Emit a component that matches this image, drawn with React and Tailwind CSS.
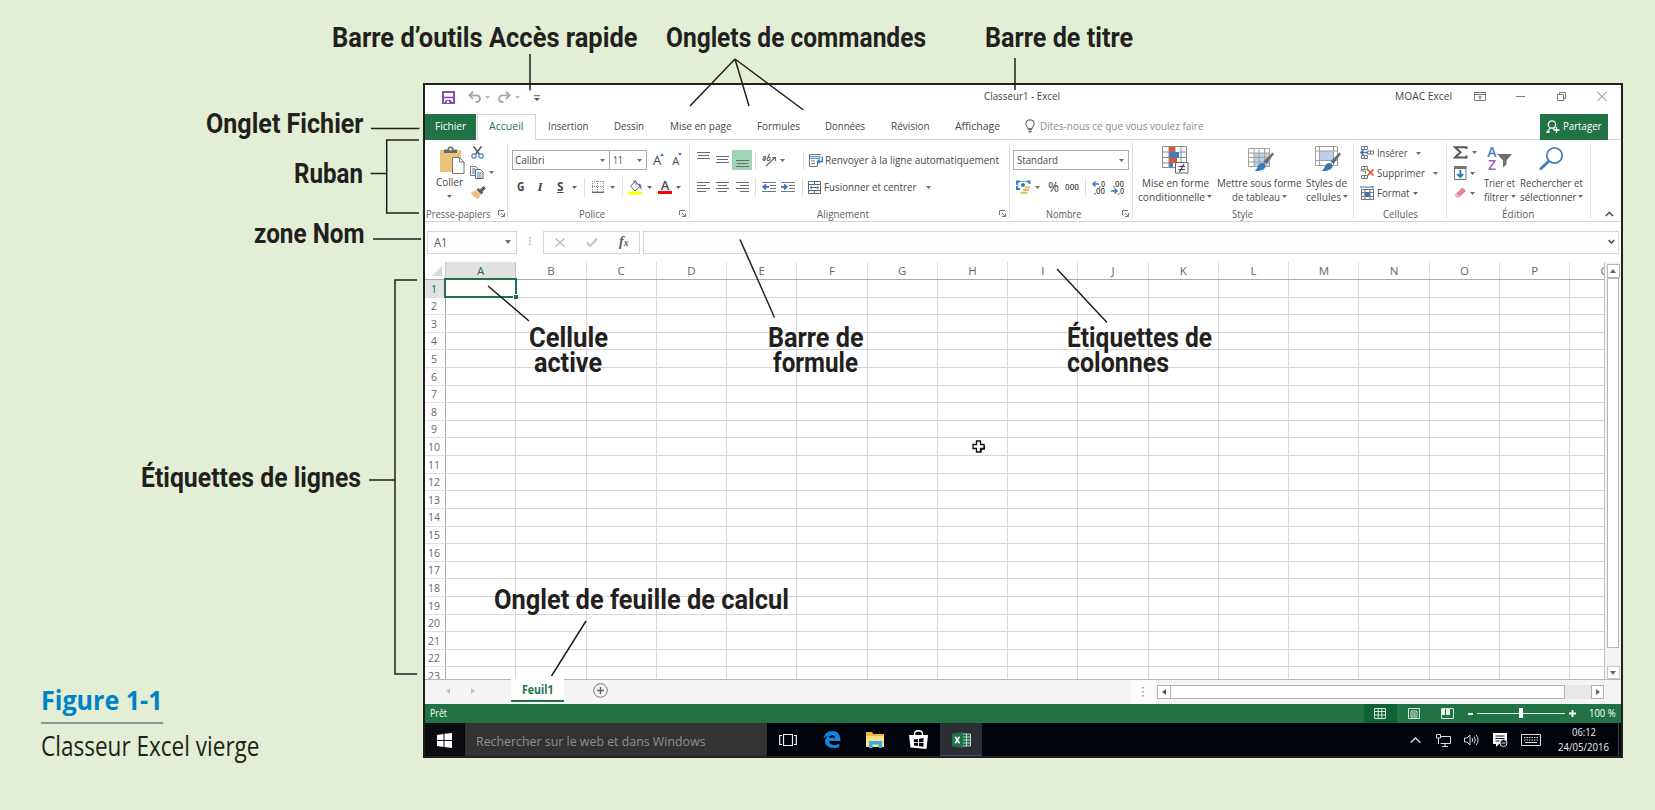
import { useLayoutEffect, useRef } from "react";

// Single-line text condensed or expanded horizontally to a given width.
function T({ w, className = "", children }) {
  const ref = useRef(null);
  useLayoutEffect(() => {
    const el = ref.current;
    el.style.transform = "none";
    const natural = el.getBoundingClientRect().width;
    if (natural) el.style.transform = `scaleX(${w / natural})`;
  }, [w, children]);
  return (
    <span className={`inline-flex shrink-0 justify-start ${className}`} style={{ width: w }}>
      <span ref={ref} className="origin-left whitespace-nowrap">{children}</span>
    </span>
  );
}

function Svg({ w, h, className = "", children }) {
  return (
    <svg width={w} height={h} viewBox={`0 0 ${w} ${h}`} className={`block shrink-0 ${className}`} fill="none">
      {children}
    </svg>
  );
}

const Caret = ({ className = "" }) => (
  <Svg w={5} h={3} className={className}><path d="M0 0h5L2.5 3z" fill="#6a6a6a" /></Svg>
);

const Launcher = ({ className = "" }) => (
  <Svg w={7} h={7} className={className}>
    <path d="M.5 5V.5H6M3 3l3 3M6.500 3v3.500H3" stroke="#777" />
  </Svg>
);

const Lines = ({ rows, w = 13, h = 11, className = "" }) => (
  <Svg w={w} h={h} className={className}>
    {rows.map(([x1, x2, y]) => (
      <path key={y} d={`M${x1} ${y}H${x2}`} stroke="#6b6b6b" />
    ))}
  </Svg>
);

const VSep = ({ h = "h-[19px]", className = "" }) => <div className={`w-px shrink-0 bg-[#e0e0e0] ${h} ${className}`} />;

function Group({ width, label, labelW, labelX, launcherX, children }) {
  return (
    <div className={`flex shrink-0 ${width}`}>
      <div className="flex min-w-0 flex-1 flex-col">
        <div className="flex h-[66px]">{children}</div>
        <div className="flex h-[15px] items-center">
          <span className="shrink-0" style={{ width: labelX }} />
          <T w={labelW} className="text-[11px] leading-[14px] text-[#5e5e5e]">{label}</T>
          {launcherX && (
            <>
              <span className="shrink-0" style={{ width: launcherX - labelX - labelW }} />
              <Launcher />
            </>
          )}
        </div>
      </div>
      <div className="mt-[3px] h-[75px] w-px bg-[#dcdcdc]" />
    </div>
  );
}

function TitleBar() {
  return (
    <div className="flex h-[29px] items-center">
      <Svg w={13} h={13} className="ml-[17px] -mt-[4px]">
        <path d="M1 1h11v11H1z" stroke="#8a4db0" strokeWidth="2" />
        <path d="M2 6.500h9" stroke="#8a4db0" strokeWidth="1.600" />
        <path d="M3.500 9h6v3h-6z" fill="#8a4db0" /><path d="M5 10h2v2H5z" fill="#fff" />
      </Svg>
      <Svg w={13} h={12} className="ml-[13px] -mt-[5px]">
        <path d="M5 .8 1.300 4.300 5 7.800M1.500 4.300H8c2.500 0 4 1.300 4 3.400 0 2.300-2 3.300-4.500 3.300" stroke="#a6a6a6" strokeWidth="1.800" />
      </Svg>
      <Svg w={5} h={3} className="ml-[4px] -mt-[5px]"><path d="M0 0h5L2.500 3z" fill="#bbb" /></Svg>
      <Svg w={13} h={12} className="ml-[8px] -mt-[5px]">
        <path d="m8 .8 3.700 3.500L8 7.800M11.500 4.300H5C2.500 4.300 1 5.600 1 7.700 1 10 3 11 5.500 11" stroke="#a6a6a6" strokeWidth="1.800" />
      </Svg>
      <Svg w={5} h={3} className="ml-[4px] -mt-[5px]"><path d="M0 0h5L2.500 3z" fill="#bbb" /></Svg>
      <Svg w={6} h={6} className="ml-[14px] -mt-[3px]"><path d="M0 .7h6" stroke="#555" /><path d="M0 3h6L3 6z" fill="#555" /></Svg>
      <T w={76} className="-mt-[7px] ml-[443.500px] text-[11.500px] leading-[14px] text-[#444]">Classeur1 - Excel</T>
      <T w={57} className="-mt-[7px] ml-[335.500px] text-[11.500px] leading-[14px] text-[#444]">MOAC Excel</T>
      <Svg w={12} h={9} className="-mt-[7px] ml-[22px]">
        <path d="M.5.5h11v8H.5zM.5 2.500h11M6 8V4M4.200 5.500 6 3.800l1.800 1.700" stroke="#777" />
      </Svg>
      <Svg w={9} h={9} className="-mt-[7px] ml-[30px]"><path d="M0 4.500h9" stroke="#777" /></Svg>
      <Svg w={9} h={9} className="-mt-[7px] ml-[32px]"><path d="M.5 2.500h6v6h-6zM2.500 2.500v-2h6v6h-2" stroke="#777" /></Svg>
      <Svg w={10} h={9} className="-mt-[7px] ml-[31px]"><path d="m.5 0 9 9M9.500 0l-9 9" stroke="#777" /></Svg>
    </div>
  );
}

function Tabs() {
  return (
    <div className="flex h-[26px] items-center border-b border-[#d5d5d5] text-[11.500px] leading-[14px] text-[#484848]">
      <div className="flex h-[26px] w-[51px] items-center bg-[#217346] pb-px pl-[9.500px] text-white">
        <T w={31}>Fichier</T>
      </div>
      <div className="-mb-px ml-[1px] flex h-[26px] w-[59px] items-center border border-b-0 border-[#d5d5d5] bg-white pb-[3px] pl-[10.500px] text-[#217346]">
        <T w={34.500}>Accueil</T>
      </div>
      <div className="flex items-center pb-px">
        <T w={40.500} className="ml-[12px]">Insertion</T>
        <T w={30} className="ml-[25.500px]">Dessin</T>
        <T w={61.500} className="ml-[25.500px]">Mise en page</T>
        <T w={43} className="ml-[25.500px]">Formules</T>
        <T w={40} className="ml-[25.500px]">Données</T>
        <T w={38.500} className="ml-[26px]">Révision</T>
        <T w={45} className="ml-[25.500px]">Affichage</T>
        <Svg w={10} h={14} className="ml-[25px] -mt-[1px]">
          <path d="M3 9.500c0-1.500-2.200-2.300-2.200-5A4.200 4.200 0 0 1 5 .8a4.200 4.200 0 0 1 4.200 3.700c0 2.700-2.200 3.500-2.200 5z" stroke="#777" strokeWidth="1.200" />
          <path d="M3 10.500h4M3.500 12.700h3" stroke="#666" strokeWidth="1.400" />
        </Svg>
        <T w={163.500} className="ml-[5px] text-[#8c8c8c]">Dites-nous ce que vous voulez faire</T>
      </div>
      <div className="ml-[336.500px] flex h-[26px] w-[68px] items-center bg-[#217346] pb-px pl-[6px] text-white">
        <Svg w={14} h={13}>
          <circle cx="6" cy="4.500" r="3.700" stroke="#fff" strokeWidth="1.300" />
          <path d="M4.500 7.800 1 12h3M7 8l1.500 1.500M10.500 7v6M7.500 10h6" stroke="#fff" strokeWidth="1.300" />
        </Svg>
        <T w={38.500} className="ml-[3px]">Partager</T>
      </div>
    </div>
  );
}

function Clipboard() {
  return (
    <Group width="w-[83px]" label="Presse-papiers" labelW={64.500} labelX={1} launcherX={73}>
      <div className="ml-[10px] flex w-[28px] flex-col items-center pt-[6px]">
        <Svg w={26} h={29} className="ml-[5px]">
          <path d="M1 4h21v22H1z" fill="#ebc378" />
          <path d="M5 7V3.500h3.500C8.500 1.500 9.500.5 11.500.5s3 1 3 3H18V7z" fill="#6a6a6a" /><circle cx="11.500" cy="3.200" r="1.200" fill="#fff" />
          <path d="M13.500 11.500h7l4.500 4.500v11.500H13.500z" fill="#fff" stroke="#777" /><path d="M20.500 11.500V16H25" stroke="#777" />
        </Svg>
        <T w={27} className="text-[11.500px] leading-[14px] text-[#484848]">Coller</T>
        <Caret className="mt-[6px]" />
      </div>
      <div className="ml-[8px] flex flex-col pt-[6px]">
        <Svg w={13} h={13}>
          <path d="M2.500.3 8.500 8.500M10.500.3 4.500 8.500" stroke="#5f5f5f" strokeWidth="1.700" />
          <circle cx="3" cy="10" r="2.200" stroke="#3f7fbf" strokeWidth="1.200" /><circle cx="10" cy="10" r="2.200" stroke="#3f7fbf" strokeWidth="1.200" />
        </Svg>
        <div className="-ml-px mt-[7px] flex items-center gap-[5px]">
          <Svg w={14} h={13}>
            <path d="M.5.5h5l2 2v7h-7z" fill="#fff" stroke="#777" /><path d="M2 3h3M2 5h3M2 7h3" stroke="#3f7fbf" />
            <path d="M5.500 3.500h5l2.500 2.500v6.500H5.500z" fill="#fff" stroke="#666" /><path d="M7 7h4.500M7 9h4.500M7 11h4.500" stroke="#3f7fbf" />
          </Svg>
          <Caret />
        </div>
        <Svg w={15} h={13} className="mt-[7px]">
          <path d="M0 6 5 4.500l4.500 4L7.500 13C4 12 1.500 9.500 0 6z" fill="#ebc07a" />
          <path d="m5.500 4 2-2 4.800 4.500-2 2zM9 3.500 12.500 0 15 2.200l-3.500 3.500z" fill="#5f5f5f" />
        </Svg>
      </div>
    </Group>
  );
}

function Police() {
  return (
    <Group width="w-[182px]" label="Police" labelW={26} labelX={70.500} launcherX={171}>
      <div className="flex flex-col pl-[4px] pt-[10px] text-[11.500px] text-[#484848]">
        <div className="flex h-[20px] items-center">
          <div className="flex h-[20px] w-[98px] items-center justify-between border border-[#ababab] pl-[2px] pr-[4px] leading-[14px]">
            <T w={29.500}>Calibri</T><Caret />
          </div>
          <div className="-ml-px flex h-[20px] w-[38px] items-center justify-between border border-[#ababab] pl-[2.500px] pr-[4px] leading-[14px]">
            <T w={10}>11</T><Caret />
          </div>
          <span className="ml-[6px] text-[13px] leading-[16px]">A</span>
          <Svg w={4} h={3} className="-mt-[12px] -ml-px"><path d="M0 3h4L2 0z" fill="#3f7fbf" /></Svg>
          <span className="ml-[8px] mt-[2px] text-[11px] leading-[16px]">A</span>
          <Svg w={4} h={3} className="-mt-[12px] -ml-px"><path d="M0 0h4L2 3z" fill="#3f7fbf" /></Svg>
        </div>
        <div className="mt-[7px] flex h-[20px] items-center leading-[14px]">
          <T w={7.500} className="ml-[5px] font-bold">G</T>
          <span className="ml-[13px] w-[6px] font-['Liberation_Serif',serif] text-[13px] font-bold italic">I</span>
          <T w={6.500} className="ml-[13px] font-bold underline">S</T>
          <Caret className="ml-[8.500px]" />
          <VSep className="ml-[7px]" />
          <Svg w={12} h={12} className="ml-[7px]">
            <path d="M.5 0v11M5.500 0v11M11.500 0v11M0 .5h12M0 5.500h12" stroke="#8a8a8a" strokeDasharray="1 1" /><path d="M0 11.300h12" stroke="#666" strokeWidth="1.300" />
          </Svg>
          <Caret className="ml-[6px]" />
          <VSep className="ml-[7px]" />
          <Svg w={15} h={15} className="ml-[5.500px]">
            <path d="m2.500 6 5-4.500 4.500 5-5 4.500z" fill="#fff" stroke="#666" /><path d="M6 3V1.500Q6 .5 7 .5T8 2v3" stroke="#666" />
            <path d="M10.500 3.500c3 .5 3.500 3 2.500 7-.5-2.500-1-3.500-2.500-5z" fill="#3f7fbf" /><path d="M0 11.500h14v3H0z" fill="#ff0" />
          </Svg>
          <Caret className="ml-[3.500px]" />
          <span className="ml-[6.500px] flex w-[14px] flex-col items-center">
            <span className="text-[13px] font-semibold leading-[11px]">A</span>
            <span className="h-[3px] w-[14px] bg-[#f00]" />
          </span>
          <Caret className="ml-[4px]" />
        </div>
      </div>
    </Group>
  );
}

function Alignement() {
  return (
    <Group width="w-[320px]" label="Alignement" labelW={52} labelX={126.500} launcherX={309}>
      <div className="flex flex-col pt-[10px] text-[11.500px] leading-[14px] text-[#484848]">
        <div className="flex h-[20px] items-center">
          <Lines className="ml-[7px] -mt-[9px]" h={7} rows={[[0, 13, 0.5], [1, 12, 3.5], [0, 13, 6.5]]} />
          <Lines className="ml-[6px] -mt-[2px]" h={7} rows={[[0, 13, 0.5], [1, 12, 3.5], [0, 13, 6.5]]} />
          <div className="ml-[3px] flex h-[20px] w-[20px] items-end justify-center bg-[#9fd5b7] pb-[3px]">
            <Lines h={7} rows={[[0, 13, 0.5], [1, 12, 3.5], [0, 13, 6.5]]} />
          </div>
          <VSep className="ml-[3px]" />
          <Svg w={15} h={14} className="ml-[6px]">
            <path d="M1.300 4.200c1-1.500 2.800-.8 2.300.6L2.300 7.500M3.200 5.200C1.500 4.500.2 6 1.300 7s1.800.3 2.200-.5M7.500.8 4.800 7M6 4.500c1.200-1 2.800.2 2 1.900-.7 1.500-2.300 1.500-2.900.3" stroke="#666" strokeWidth="1.100" />
            <path d="M4 13 13 4.500M10 4.500h3.500V8" stroke="#666" strokeWidth="1.100" />
          </Svg>
          <Caret className="ml-[2.500px]" />
          <VSep className="ml-[18px]" />
          <Svg w={14} h={14} className="ml-[5px]">
            <path d="M0 1.500h12" stroke="#777" /><path d="M0 3.500h11v2H0z" fill="#d8e6f4" stroke="#3f7fbf" strokeWidth=".8" /><path d="M.5 1v12.500h8M2 8h4M2 10.500h4M8.500 9.500V13" stroke="#777" />
            <path d="M13.300 3.500v5H8.500M10.500 6.500l-2 2 2 2" stroke="#2f78c0" strokeWidth="1.300" />
          </Svg>
          <T w={174} className="ml-[2px]">Renvoyer à la ligne automatiquement</T>
        </div>
        <div className="mt-[7px] flex h-[20px] items-center">
          <Lines className="ml-[7px]" w={13} h={10} rows={[[0, 13, 0.5], [0, 9, 3.5], [0, 13, 6.5], [0, 9, 9.5]]} />
          <Lines className="ml-[6px]" w={13} h={10} rows={[[0, 13, 0.5], [2, 11, 3.5], [0, 13, 6.5], [2, 11, 9.5]]} />
          <Lines className="ml-[7px]" w={13} h={10} rows={[[0, 13, 0.5], [4, 13, 3.5], [0, 13, 6.5], [4, 13, 9.5]]} />
          <VSep className="ml-[6px]" />
          <Svg w={14} h={11} className="ml-[6px]">
            <path d="M0 .5h14M8 3.500h6M8 6.500h6M0 9.500h14" stroke="#777" /><path d="M7 4.800H1.500M4 2.300 1.200 4.800 4 7.300" stroke="#2f78c0" strokeWidth="1.700" />
          </Svg>
          <Svg w={14} h={11} className="ml-[5px]">
            <path d="M0 .5h14M8 3.500h6M8 6.500h6M0 9.500h14" stroke="#777" /><path d="M0 4.800h5.500M3 2.300l2.800 2.500L3 7.300" stroke="#2f78c0" strokeWidth="1.700" />
          </Svg>
          <VSep className="ml-[7px]" />
          <Svg w={13} h={13} className="ml-[5px]">
            <path d="M.5.5h12v12H.5zM.5 3.500h12M.5 9.500h12M6.500.5v3M6.500 9.500v3" stroke="#666" />
            <path d="M2 6.500h9M3.800 5 2.200 6.500 3.800 8M9.200 5l1.600 1.500L9.200 8" stroke="#2f78c0" />
          </Svg>
          <T w={92.500} className="ml-[3px]">Fusionner et centrer</T>
          <Caret className="ml-[9px]" />
        </div>
      </div>
    </Group>
  );
}

function Nombre() {
  return (
    <Group width="w-[123px]" label="Nombre" labelW={35.500} labelX={36} launcherX={112}>
      <div className="flex flex-col pl-[3px] pt-[10px] text-[11.500px] leading-[14px] text-[#484848]">
        <div className="flex h-[20px] w-[116px] items-center justify-between border border-[#ababab] pl-[2.500px] pr-[4px]">
          <T w={41}>Standard</T><Caret />
        </div>
        <div className="mt-[7px] flex h-[20px] items-center">
          <Svg w={15} h={15} className="ml-[3px]">
            <path d="M1 5V1.500h3M10.500 1.500h3V4M1 6v3h3" fill="none" stroke="#2f78c0" strokeWidth="1.800" />
            <path d="M4 1.500h6M2 3.500v3" stroke="#7fb0dd" /><circle cx="7" cy="5" r="2" fill="#2f78c0" />
            <path d="M8.500 6.500H14v2H8.500zM7 9h6v2H7zM4.500 11.800h7v2h-7z" fill="#e9b867" />
          </Svg>
          <Caret className="ml-[4px]" />
          <T w={11} className="ml-[8px] text-[14px]">%</T>
          <T w={14} className="ml-[6px] text-[9.500px] font-semibold">000</T>
          <VSep className="ml-[6px]" />
          <span className="ml-[6px] flex flex-col text-[8.500px] font-semibold leading-[7px]">
            <span className="flex items-center"><Svg w={7} h={6}><path d="M7 3H1M3.500.5 1 3l2.500 2.500" stroke="#2f78c0" strokeWidth="1.400" /></Svg><T w={6}>,0</T></span>
            <T w={11} className="ml-[2px]">,00</T>
          </span>
          <span className="ml-[6px] flex flex-col text-[8.500px] font-semibold leading-[7px]">
            <T w={11} className="ml-[2px]">,00</T>
            <span className="flex items-center"><Svg w={7} h={6}><path d="M0 3h6M3.500.5 6 3 3.500 5.500" stroke="#2f78c0" strokeWidth="1.400" /></Svg><T w={6}>,0</T></span>
          </span>
        </div>
      </div>
    </Group>
  );
}

function Brush() {
  return (
    <>
      <path d="M25.500 6.500 27 8 19.500 18l-3-2.500z" fill="#6a6a6a" />
      <path d="M15.500 17c2 0 3.500 1.500 3 3.500-.5 3-5 5-11.500 4.500 2.500-1 3-2.500 4-5 .8-2 2.500-3 4.500-3z" fill="#3579bb" />
    </>
  );
}

function Style() {
  return (
    <Group width="w-[221px]" label="Style" labelW={21} labelX={99}>
      <div className="flex pt-[6px] text-[11.500px] leading-[14px] text-[#484848]">
        <div className="ml-[5px] flex w-[76px] flex-col items-start">
          <Svg w={27} h={28} className="ml-[24px]">
            <path d="M.5.5h24v21H.5z" fill="#fff" />
            <path d="M7 1h6v5H7zM7 12h8v5H7z" fill="#e0532f" /><path d="M7 6h10v6H7zM7 17h4v5H7z" fill="#3f7fbf" />
            <path d="M.5.5h24v21H.5zM.5 6h6.500M17 6h7.500M.5 11.500h6.500M17 11.500h7.500M.5 17h6.500M7 .5v21M19 .5v21M13 .5V6" stroke="#8a8a8a" />
            <path d="M13.500 16.500H26V27H13.500z" fill="#fff" stroke="#666" /><path d="M16.500 20.500h6.500M16.500 23.500h6.500M22 18l-4.500 8" stroke="#444" strokeWidth="1.200" />
          </Svg>
          <T w={67} className="ml-[3.500px] mt-[1.500px]">Mise en forme</T>
          <span className="flex items-center gap-[2px]"><T w={67}>conditionnelle</T><Caret /></span>
        </div>
        <div className="ml-[3px] flex w-[86px] flex-col items-start">
          <Svg w={28} h={28} className="ml-[30px]">
            <path d="M1.500 2.500h21v18h-21z" fill="#fff" /><path d="M7 7h15.500v13.500H7z" fill="#bcd0ea" />
            <path d="M1.500 2.500h21v18h-21zM1.500 7h21M1.500 11.500h21M1.500 16h21M7 2.500v18M12 2.500v18M17.500 2.500v18" stroke="#a0a0a0" />
            <Brush />
          </Svg>
          <T w={84.500} className="mt-[1.500px] -ml-[.5px]">Mettre sous forme</T>
          <span className="ml-[14.500px] flex items-center gap-[2.500px]"><T w={48}>de tableau</T><Caret /></span>
        </div>
        <div className="ml-[3px] flex flex-col items-start">
          <Svg w={28} h={28} className="ml-[8px]">
            <path d="M1.500.5h22v19h-22z" fill="#fff" /><path d="M5.500 5h14v9.500h-14z" fill="#bcd0ea" />
            <path d="M1.500.5h22v19h-22zM1.500 5h22M1.500 14.500h22M5.500.5v19M19.500.5v19" stroke="#a0a0a0" />
            <Brush />
          </Svg>
          <T w={41} className="mt-[1.500px]">Styles de</T>
          <span className="flex items-center gap-[1.500px]"><T w={35}>cellules</T><Caret /></span>
        </div>
      </div>
    </Group>
  );
}

function Cellules() {
  return (
    <Group width="w-[93px]" label="Cellules" labelW={35} labelX={28.500}>
      <div className="flex flex-col gap-[6.200px] pl-[5.500px] pt-[6px] text-[11.500px] leading-[14px] text-[#484848]">
        <div className="flex items-center">
          <Svg w={14} h={14}>
            <path d="M1.500.5h6v3h-6zM4.500.5v3M7.500 5h6v3h-6zM10.500 5v3M1.500 9.500h6v3h-6zM4.500 9.500v3" stroke="#777" />
            <path d="M7 6.500H1M3.500 4 1 6.500 3.500 9" stroke="#2f78c0" strokeWidth="1.700" />
          </Svg>
          <T w={30.500} className="ml-[3.500px]">Insérer</T><Caret className="ml-[8px]" />
        </div>
        <div className="flex items-center">
          <Svg w={14} h={14}>
            <path d="M1.500.5h6v3h-6zM4.500.5v3M.5 5h5v3M1.500 9.500h6v3h-6zM4.500 9.500v3" stroke="#777" />
            <path d="m7.500 3.500 6 6M13.500 3.500l-6 6" stroke="#e0532f" strokeWidth="1.700" />
          </Svg>
          <T w={48} className="ml-[3.500px]">Supprimer</T><Caret className="ml-[8px]" />
        </div>
        <div className="flex items-center">
          <Svg w={14} h={14}>
            <path d="M1.500 3.500h12v10h-12zM1.500 6.500h12M1.500 10.500h12M5 3.500v10M10 3.500v10" stroke="#777" /><path d="M5 6.500h5v4H5z" fill="#2f78c0" />
            <path d="M1 1h12M1 0v2.500M13 0v2.500" stroke="#2f78c0" />
          </Svg>
          <T w={32.500} className="ml-[3.500px]">Format</T><Caret className="ml-[3px]" />
        </div>
      </div>
    </Group>
  );
}

function Edition() {
  return (
    <Group width="w-[144px]" label="Édition" labelW={32.500} labelX={55}>
      <div className="flex pt-[6px] text-[11.500px] leading-[14px] text-[#484848]">
        <div className="ml-[6px] flex w-[24px] flex-col">
          <div className="flex items-center justify-between">
            <Svg w={15} h={13}><path d="M13.500 3V1.200H2l5.500 5-5.500 5.300h11.500V9.500" stroke="#555" strokeWidth="2" /></Svg><Caret />
          </div>
          <div className="mt-[7px] flex items-center gap-[3px]">
            <Svg w={14} h={14}><path d="M1.500.5h11.500v13H1.500z" stroke="#777" /><path d="M1 0h12.500v3H1z" fill="#777" /><path d="M7.300 4v7M4.500 8l2.800 3 2.800-3" stroke="#2f78c0" strokeWidth="1.900" /></Svg><Caret />
          </div>
          <div className="mt-[7px] flex items-center gap-[3px]">
            <Svg w={14} h={12}><path d="m2 7.500 7.500-7L13 4 5.500 11z" fill="#e87f92" /><path d="m2 7.500 1.500-1.300L7 9.500 5.500 11H4L1.500 8.500z" fill="#f2b3bd" /></Svg><Caret />
          </div>
        </div>
        <div className="ml-[7px] flex flex-col items-start">
          <div className="flex h-[27px] items-start">
            <span className="ml-[3px] flex w-[10px] flex-col items-center text-[14px] font-semibold leading-[12.500px]"><span className="text-[#3f7fbf]">A</span><span className="text-[#9a5fc0]">Z</span></span>
            <Svg w={15} h={14} className="mt-[8px]"><path d="M0 0h15L9.500 6.500v4L6 13.500v-7z" fill="#6f6f6f" /></Svg>
          </div>
          <T w={31} className="mt-[2.500px]">Trier et</T>
          <span className="flex items-center gap-[2.500px]"><T w={24.500}>filtrer</T><Caret /></span>
        </div>
        <div className="ml-[4px] flex flex-col items-start">
          <Svg w={26} h={27} className="ml-[18px]">
            <circle cx="16.500" cy="9.500" r="7.700" stroke="#3f7fbf" strokeWidth="1.700" /><path d="M11 15 2 23.500" stroke="#3f7fbf" strokeWidth="3" />
          </Svg>
          <T w={63} className="-ml-[.5px] mt-[2.500px]">Rechercher et</T>
          <span className="-ml-[.5px] flex items-center gap-[2px]"><T w={56.500}>sélectionner</T><Caret /></span>
        </div>
      </div>
    </Group>
  );
}

function FormulaBar() {
  return (
    <div className="flex h-[40px] items-start pt-[9px] pl-[2px] text-[#5e5e5e]">
      <div className="flex h-[23px] w-[90px] items-center justify-between border border-[#d6d6d6] bg-[#fdfdfd] pl-[6px] pr-[5px]">
        <T w={13.500} className="text-[12px] leading-[14px]">A1</T>
        <Svg w={6} h={4} className="-mt-[2px]"><path d="M0 0h6L3 4z" fill="#6a6a6a" /></Svg>
      </div>
      <Svg w={2} h={10} className="ml-[11.500px] mt-[6px]"><path d="M1 0v10" stroke="#999" strokeWidth="1.200" strokeDasharray="1.500 1.800" /></Svg>
      <div className="ml-[12.500px] flex h-[23px] w-[97px] items-center border border-[#d6d6d6] bg-[#fdfdfd]">
        <Svg w={10} h={9} className="ml-[11px]"><path d="m.5.5 9 8M9.500.5l-9 8" stroke="#c0c0c0" strokeWidth="1.400" /></Svg>
        <Svg w={12} h={9} className="ml-[21px]"><path d="m.7 4.500 3.500 3.500L11 .7" stroke="#c0c0c0" strokeWidth="1.800" /></Svg>
        <span className="ml-[21px] font-['Liberation_Serif',serif] text-[14px] font-bold italic leading-[14px]">f<span className="text-[10px]">x</span></span>
      </div>
      <div className="ml-[3px] flex h-[23px] w-[976px] items-center justify-end border border-[#d6d6d6] bg-[#fdfdfd] pr-[3px]">
        <Svg w={7} h={6} className="-mt-px"><path d="m.7 1 2.800 3L6.300 1" stroke="#555" strokeWidth="1.700" /></Svg>
      </div>
    </div>
  );
}

const COLS = "ABCDEFGHIJKLMNOPQ".split("");
const ROWS = Array.from({ length: 23 }, (_, i) => i + 1);

function Sheet() {
  return (
    <div className="flex h-[418px] border-b border-[#b5b5b5]">
      <div className="w-[1180px] overflow-hidden border-r border-[#c4c4c4] text-[11.500px] text-[#666]">
        <div className="flex h-[18px] border-b border-[#ababab]">
          <div className="flex w-[21px] shrink-0 items-end justify-end border-r border-[#c9c9c9] pb-[3px] pr-[3px]">
            <Svg w={10} h={10}><path d="M10 0v10H0z" fill="#d9d9d9" /></Svg>
          </div>
          {COLS.map((c) => (
            <div
              key={c}
              className={`flex h-[17px] w-[70.270px] shrink-0 items-center justify-center border-r leading-[16px] ${
                c === "A" ? "border-[#c0c0c0] bg-[#e1e1e1] text-[#217346]" : "border-[#e0e0e0]"
              }`}
            >
              {c}
            </div>
          ))}
        </div>
        {ROWS.map((r) => (
          <div key={r} className="flex h-[17.610px]">
            <div
              className={`flex w-[21px] shrink-0 items-center justify-center border-r border-b border-r-[#ababab] border-b-[#e0e0e0] pr-[3px] pt-[.5px] leading-[16px] ${
                r === 1 ? "bg-[#e1e1e1] text-[#217346]" : ""
              }`}
            >
              <T w={r < 10 ? 6 : 12}>{r}</T>
            </div>
            {COLS.map((c) => (
              <div key={c} className="relative w-[70.270px] shrink-0 border-r border-b border-[#d6d6d6]">
                {c === "A" && r === 1 && (
                  <div className="absolute -left-[2px] -top-[2px] z-10 h-[20px] w-[73px] border-2 border-[#217346]">
                    <div className="absolute -bottom-[3px] -right-[3px] h-[5px] w-[5px] border-t border-l border-white bg-[#217346]" />
                  </div>
                )}
              </div>
            ))}
          </div>
        ))}
      </div>
      <div className="flex w-[16px] flex-col items-center bg-[#f4f4f4] pt-[2px]">
        <div className="flex h-[14px] w-[13px] items-center justify-center border border-[#b5b5b5] bg-white"><Svg w={6} h={4}><path d="M0 4h6L3 0z" fill="#666" /></Svg></div>
        <div className="h-[370px] w-[12px] border border-[#b5b5b5] bg-white" />
        <div className="mt-[18px] flex h-[13px] w-[13px] items-center justify-center border border-[#c9c9c9] bg-white"><Svg w={6} h={4}><path d="M0 0h6L3 4z" fill="#666" /></Svg></div>
      </div>
    </div>
  );
}

function SheetBar() {
  return (
    <div className="flex h-[24px] items-start bg-[#f4f4f4]">
      <Svg w={4} h={6} className="ml-[21px] mt-[8px]"><path d="M4 0v6L0 3z" fill="#c4c4c4" /></Svg>
      <Svg w={4} h={6} className="ml-[21px] mt-[8px]"><path d="M0 0v6l4-3z" fill="#c4c4c4" /></Svg>
      <div className="relative -mt-px ml-[36px] flex h-[22.500px] w-[53px] items-center justify-center border-b-2 border-[#217346] bg-white pt-px">
        <T w={31.500} className="text-[12px] font-bold leading-[14px] text-[#217346]">Feuil1</T>
      </div>
      <Svg w={15} h={15} className="ml-[29px] mt-[3px]"><circle cx="7.500" cy="7.500" r="6.800" stroke="#777" /><path d="M4 7.500h7M7.500 4v7" stroke="#666" strokeWidth="1.600" /></Svg>
      <div className="ml-[522px] flex h-[24px] w-[25px] justify-center bg-[#fbfbfb] pt-[7px]"><Svg w={2} h={10}><path d="M1 0v10" stroke="#999" strokeWidth="1.500" strokeDasharray="1.500 2.500" /></Svg></div>
      <div className="ml-[2px] mt-[5px] flex h-[14px] w-[447px] bg-[#e8e8e8]">
        <div className="flex w-[14px] items-center justify-center border border-[#b0b0b0] bg-white"><Svg w={4} h={6}><path d="M4 0v6L0 3z" fill="#555" /></Svg></div>
        <div className="w-[394px] border border-l-0 border-[#b0b0b0] bg-white" />
        <div className="ml-auto flex w-[13px] items-center justify-center border border-[#b0b0b0] bg-white"><Svg w={4} h={6}><path d="M0 0v6l4-3z" fill="#666" /></Svg></div>
      </div>
    </div>
  );
}

function StatusBar() {
  return (
    <div className="flex h-[19px] items-center bg-[#217346] text-[10px] leading-[14px] text-white">
      <T w={17} className="-mt-[1px] ml-[4.500px]">Prêt</T>
      <div className="ml-[917.500px] flex h-[19px] w-[33px] items-center justify-center bg-[#0e6233]">
        <Svg w={12} h={11} className="-mt-px -ml-[2px]"><path d="M.5.5h11v10H.5zM.5 3.500h11M.5 7h11M4.200.5v10M7.800.5v10" stroke="#d5e5dc" /></Svg>
      </div>
      <Svg w={12} h={11} className="-mt-px ml-[11px]"><path d="M.5.5h11v10H.5zM3 3h6v6H3zM4 5h4M4 7h4" stroke="#d5e5dc" /></Svg>
      <Svg w={13} h={11} className="-mt-px ml-[21px]"><path d="M.5.5h12v10H.5z" stroke="#d5e5dc" /><path d="M1 1h3v6H1zM5 1h4v6H5z" fill="#e8f2ec" /></Svg>
      <Svg w={5} h={2} className="ml-[14px]"><path d="M0 1h5" stroke="#fff" strokeWidth="1.800" /></Svg>
      <div className="-mt-px ml-[4px] flex h-[10px] w-[88px] items-center">
        <div className="h-px w-[42px] bg-[#dfeae4]" /><div className="h-[10px] w-[4px] bg-white" /><div className="h-px w-[42px] bg-[#dfeae4]" />
      </div>
      <Svg w={7} h={7} className="ml-[4px]"><path d="M0 3.500h7M3.500 0v7" stroke="#fff" strokeWidth="1.800" /></Svg>
      <T w={26.500} className="-mt-px ml-[12.500px] text-[10.500px]">100 %</T>
    </div>
  );
}

function TaskBar() {
  return (
    <div className="flex h-[33px] items-center bg-[#02040b] text-[#eee]">
      <div className="flex h-full w-[40px] items-center justify-center bg-[#0b0c10] pr-[2px] pt-px">
        <Svg w={15} h={15}><path d="m0 2 6.500-1v6H0zM7.500.8 15 0v7H7.500zM0 8h6.500v6L0 13zM7.500 8H15v7l-7.500-1z" fill="#fff" /></Svg>
      </div>
      <div className="flex h-full w-[302px] items-center bg-[#333] pl-[10.500px] pt-[2px]">
        <T w={229.500} className="text-[13.500px] leading-[18px] text-[#8f8f8f]">Rechercher sur le web et dans Windows</T>
      </div>
      <Svg w={18} h={12} className="ml-[12px]"><path d="M4.500.5h9v11h-9zM3 1.500H.7v9H3M15 1.500h2.300v9H15" stroke="#eee" strokeWidth="1.200" /></Svg>
      <Svg w={18} h={17} className="ml-[26px]">
        <path d="M.5 8C1 3 4.500 0 9.300 0c5 0 8 3.500 8 8v2H6c.2 2.600 2.300 3.900 5 3.900 2 0 3.700-.5 5.300-1.500v3.500c-1.700.8-3.600 1.100-5.800 1.100C5.500 17 2 14.500 2 10.500c0-2.600 1.500-4.700 3.800-6C3.700 5 1.700 6.300.5 8zM6.200 6.800h6C12.200 5 11.200 3.900 9.500 3.900c-1.800 0-3 1.200-3.300 2.900z" fill="#1585e0" />
      </Svg>
      <Svg w={18} h={16} className="ml-[25px] mt-px">
        <path d="M0 0h6l1.500 2H18v13H0z" fill="#e9b840" /><path d="M0 4h18v11H0z" fill="#fbdf82" /><path d="M3 9h13v7h-3.500v-3.500h-6V16H3z" fill="#35b0e6" />
      </Svg>
      <Svg w={19} h={19} className="ml-[25px]">
        <path d="M5.500 6V4c0-2 1.500-3.300 4-3.300S13.500 2 13.500 4v2" stroke="#fff" strokeWidth="1.500" /><path d="M0 5h19l-1.500 14-16-1.500z" fill="#fff" />
        <path d="m5 9.500 4-.6v3H5zM10 8.700l4.500-.7v4H10zM5 12.800h4v3.200l-4-.5zM10 12.800h4.500v4L10 16.200z" fill="#02040b" />
      </Svg>
      <div className="ml-[12px] flex h-full w-[42px] items-center justify-center border-b border-[#41506a] bg-[#2b2e35] pt-px">
        <Svg w={19} h={16}>
          <path d="M10.500 2h8v12h-8z" fill="#1b6b3e" stroke="#b9d7c6" /><path d="M10 5h8M10 8h8M10 11h8M14.500 2v12" stroke="#b9d7c6" />
          <path d="m0 1.500 11-1.500v16L0 14.500z" fill="#1e7446" /><path d="m3 4.800 4.500 6.500M7.500 4.800 3 11.300" stroke="#fff" strokeWidth="1.600" />
        </Svg>
      </div>
      <Svg w={11} h={6} className="ml-[427.500px] mt-px"><path d="m.7 5.500 4.800-4.500 4.800 4.500" stroke="#ddd" strokeWidth="1.400" /></Svg>
      <Svg w={15} h={13} className="ml-[15.500px] mt-px"><path d="M4.500 2.500h10v7h-10M9 9.500v3M6 12.500h6M.5.5h4v3.500h-4zM2.500 4v6" stroke="#ddd" /></Svg>
      <Svg w={15} h={12} className="ml-[13px] mt-px"><path d="M.5 4v4h2.500l3 3V1L3 4zM8 4q1.500 2 0 4M10 2.500q2.800 3.500 0 7M12.200 1q3.700 5 0 10" stroke="#ddd" /></Svg>
      <Svg w={15} h={14} className="ml-[14px] mt-px"><path d="M0 0h14v11H6l-3 3v-3H0z" fill="#fff" /><path d="M2.500 3h9M2.500 5.500h9M2.500 8h4" stroke="#11131a" /><circle cx="10.500" cy="10" r="3.500" fill="#11131a" stroke="#ddd" /><path d="M8.500 10h4" stroke="#ddd" /></Svg>
      <Svg w={20} h={12} className="ml-[13px] mt-px"><path d="M.5.500h19v11H.5z" stroke="#ddd" /><path d="M3 3.500h14M3 6h14" stroke="#ddd" strokeDasharray="1.500 1" /><path d="M4 8.500h12" stroke="#ddd" /></Svg>
      <div className="ml-[17px] flex w-[51px] flex-col items-center text-[11.500px] leading-[14.500px]">
        <T w={24}>06:12</T>
        <T w={51}>24/05/2016</T>
      </div>
      <div className="ml-auto h-full w-[3px] border-l border-[#3a3c42]" />
    </div>
  );
}

// Figure labels: x, baseline y and width of each line of text.
const LABELS = [
  [332, 46.5, 305.5, "Barre d’outils Accès rapide"],
  [666, 46.5, 260, "Onglets de commandes"],
  [985, 46.5, 148, "Barre de titre"],
  [205.5, 132.5, 157.5, "Onglet Fichier"],
  [293.5, 182.5, 69, "Ruban"],
  [254, 242.5, 110.5, "zone Nom"],
  [140.5, 486.5, 220, "Étiquettes de lignes"],
  [528.5, 346.5, 79, "Cellule"],
  [534, 371.5, 68, "active"],
  [768, 346.5, 95.5, "Barre de"],
  [773, 371.5, 85, "formule"],
  [1067, 346.5, 145, "Étiquettes de"],
  [1067, 371.5, 102, "colonnes"],
  [494, 608.5, 295, "Onglet de feuille de calcul"],
];

function Annotations() {
  return (
    <div className="pointer-events-none absolute inset-0 z-20">
      <svg width="1655" height="810" viewBox="0 0 1655 810" className="absolute inset-0" fill="none" stroke="#231f20" strokeWidth="1.500">
        <path d="M530 54v36.500M735 59l-45 47M735 59l14 47M735 59l68.500 51M1015 58v32" />
        <path d="M371 128.500h48.500M419 140h-32.300v73H419M370.500 173.500h16M373 239h48M417 280h-22v394h22M369 480h26" />
        <path d="m488 286 41 35M740 239.500l34.500 78M1057 269l50 53.500M586 621l-34.500 55" />
      </svg>
      {LABELS.map(([x, y, w, text]) => (
        <div key={text} className="absolute h-[32px] font-['Roboto',sans-serif] text-[27px] font-bold leading-[32px] text-[#231f20]" style={{ left: x, top: y - 24.5 }}>
          <T w={w}>{text}</T>
        </div>
      ))}
    </div>
  );
}

export default function App() {
  return (
    <div className="relative flex h-[810px] w-[1655px] items-start overflow-hidden bg-[#e2efd4] font-['Open_Sans','Noto_Sans',sans-serif]">
      <aside className="flex w-[423px] shrink-0 flex-col items-start pl-[40.500px] pt-[682px]">
        <T w={121.5} className="text-[26.500px] font-bold leading-[36px] text-[#0082c8]">Figure 1-1</T>
        <div className="mt-[4px] h-[2px] w-[122.500px] bg-[#939598]" />
        <T w={218.5} className="mt-[4px] text-[26.500px] leading-[36px] text-[#231f20]">Classeur Excel vierge</T>
      </aside>
      <main className="mt-[83px] flex h-[675px] w-[1200px] flex-col border-2 border-[#231f20] bg-white">
        <TitleBar />
        <Tabs />
        <div className="flex h-[82px] border-b border-[#d5d5d5]">
          <Clipboard />
          <Police />
          <Alignement />
          <Nombre />
          <Style />
          <Cellules />
          <Edition />
          <Svg w={9} h={6} className="ml-[14px] mt-[71px]"><path d="m.7 5 3.600-3.500L8 5" stroke="#555" strokeWidth="1.700" /></Svg>
        </div>
        <FormulaBar />
        <Sheet />
        <SheetBar />
        <StatusBar />
        <TaskBar />
      </main>
      <Svg w={13} h={14} className="absolute left-[972px] top-[440px]">
        <path d="M4.500 1h4v3.500H12v4H8.500V12h-4V8.500H1v-4h3.500z" fill="#fff" stroke="#111" strokeWidth="1.300" />
        <path d="M9.300 12.500V9.300h3.200V5.500" stroke="#111" />
      </Svg>
      <Annotations />
    </div>
  );
}
